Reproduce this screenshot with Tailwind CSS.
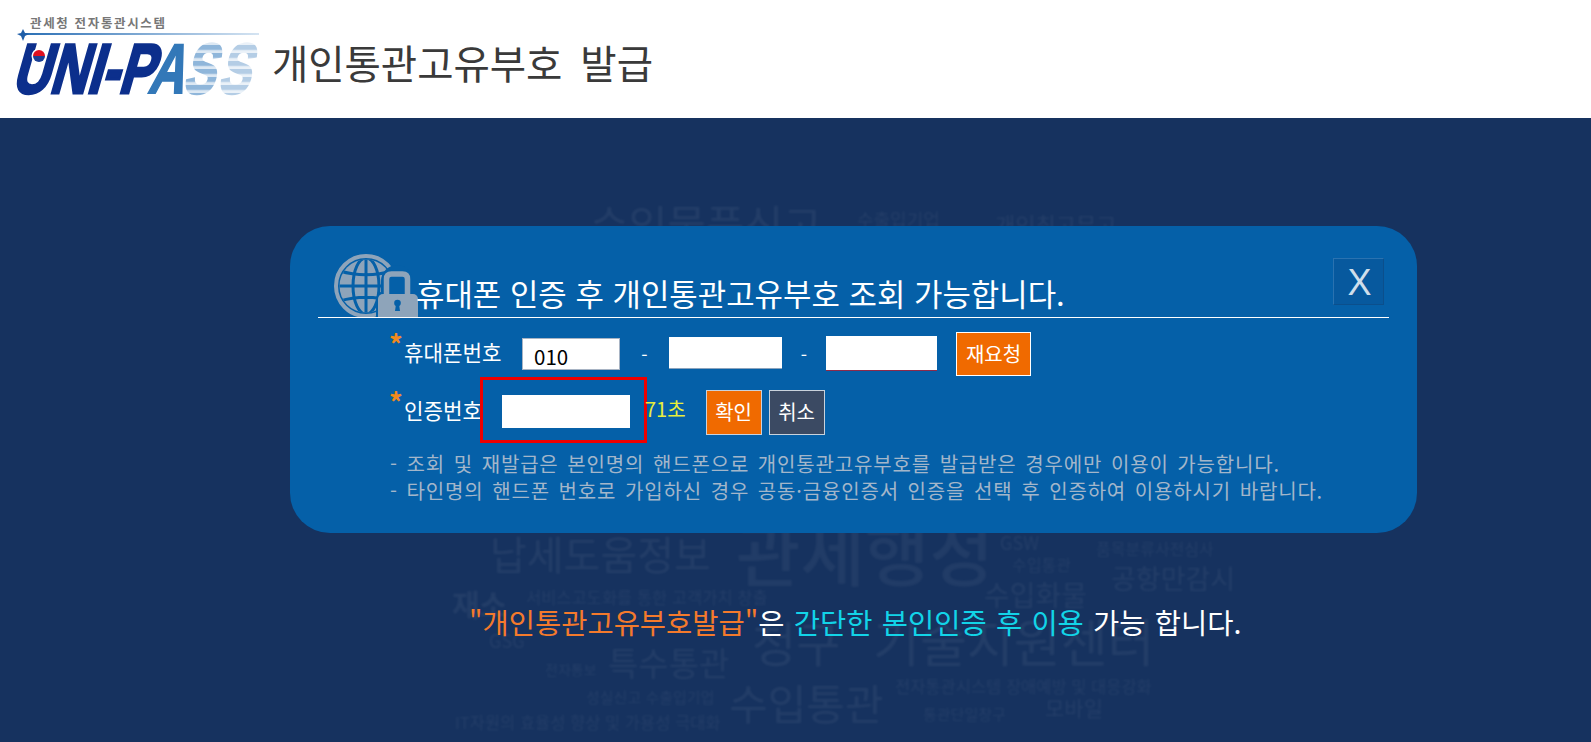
<!DOCTYPE html>
<html lang="ko">
<head>
<meta charset="utf-8">
<title>개인통관고유부호 발급</title>
<script src="https://cdn.jsdelivr.net/npm/@tailwindcss/browser@4"></script>
</head>
<body class="m-0 h-[742px] w-[1591px] overflow-hidden bg-[#16325f] font-['Noto_Sans_CJK_KR','Noto_Sans',sans-serif]">
<header class="flex h-[118px] items-start bg-white">
  <svg class="ml-[14px] mt-[12px] h-[86px] w-[246px] shrink-0" viewBox="14 12 246 86" xmlns="http://www.w3.org/2000/svg">
    <defs>
      <linearGradient id="ln" x1="0" x2="1" y1="0" y2="0"><stop offset="0" stop-color="#2a6fb5"/><stop offset="1" stop-color="#d5e4f2"/></linearGradient>
      <pattern id="stripes" width="8" height="8" patternUnits="userSpaceOnUse"><rect width="8" height="8" fill="#dce8f3"/><rect width="8" height="5" fill="#8fb6da"/></pattern>
      <pattern id="stripes2" width="8" height="8" patternUnits="userSpaceOnUse"><rect width="8" height="8" fill="#eaf1f8"/><rect width="8" height="5" fill="#b4cde5"/></pattern>
    </defs>
    <text x="30" y="28" font-size="12.5" font-weight="700" fill="#777" font-family="Noto Sans CJK KR" textLength="135">관세청  전자통관시스템</text>
    <rect x="23" y="33" width="236" height="2" fill="url(#ln)"/>
    <path d="M23 29l2 4 4 1-4 2-2 5-2-5-4-2 4-1z" fill="#1f5ea8"/>
    <g font-size="70" font-weight="700" font-family="Liberation Sans">
      <text transform="translate(11 93) skewX(-16)" fill="#0c2f8c" stroke="#0c2f8c" stroke-width="3" textLength="141" lengthAdjust="spacingAndGlyphs">UNI-P</text>
      <text transform="translate(147 93) skewX(-16)" fill="#3378b8" stroke="#3378b8" stroke-width="2" textLength="36" lengthAdjust="spacingAndGlyphs">A</text>
      <text transform="translate(182 93) skewX(-16)" fill="url(#stripes)" stroke="url(#stripes)" stroke-width="3" textLength="31" lengthAdjust="spacingAndGlyphs">S</text>
      <text transform="translate(217 93) skewX(-16)" fill="url(#stripes2)" stroke="url(#stripes2)" stroke-width="3" textLength="31" lengthAdjust="spacingAndGlyphs">S</text>
    </g>
    <circle cx="39" cy="56" r="7.5" fill="#fff"/>
    <path d="M33 56a6 6 0 0 1 12 0z" fill="#e01020"/>
    <path d="M33 56a6 6 0 0 0 12 0z" fill="#1b3f95"/>
  </svg>
  <h1 class="ml-[12px] mt-[34px] whitespace-pre text-[39.5px] leading-[56px] font-normal tracking-[-0.05px] [word-spacing:-2px] text-[#3a3a3a]">개인통관고유부호  발급</h1>
</header>

<main class="relative h-[624px]">
  <div class="pointer-events-none absolute inset-0 overflow-hidden whitespace-nowrap leading-none text-white/[0.06] blur-[1px]" aria-hidden="true">
    <span class="absolute left-[590px] top-[84px] text-[42px]">수입물품신고</span>
    <span class="absolute left-[857px] top-[92px] text-[18px]">수출입기업</span>
    <span class="absolute left-[995px] top-[94px] text-[22px]">개인최고무고</span>
    <span class="absolute left-[490px] top-[415px] text-[40px]">납세도움정보</span>
    <span class="absolute left-[736px] top-[398px] text-[70px] font-medium text-white/[0.05]">관세행정</span>
    <span class="absolute left-[1000px] top-[415px] text-[18px]">GSW</span>
    <span class="absolute left-[1012px] top-[438px] text-[16px]">수입통관</span>
    <span class="absolute left-[1096px] top-[422px] text-[16px]">품목분류사전심사</span>
    <span class="absolute left-[1111px] top-[446px] text-[27px]">공항만감시</span>
    <span class="absolute left-[984px] top-[462px] text-[28px]">수입화물</span>
    <span class="absolute left-[452px] top-[470px] text-[30px] font-bold">재소</span>
    <span class="absolute left-[526px] top-[471px] text-[16.5px]">서비스고도화를 통한 고객가치 창출</span>
    <span class="absolute left-[489px] top-[513px] text-[18px]">GSG</span>
    <span class="absolute left-[752px] top-[499px] text-[48px]">청구</span>
    <span class="absolute left-[873px] top-[497px] text-[51px]">기술지원센터</span>
    <span class="absolute left-[608px] top-[528px] text-[33px]">특수통관</span>
    <span class="absolute left-[545px] top-[544px] text-[14px]">전자통보</span>
    <span class="absolute left-[586px] top-[571px] text-[15px]">성실신고 수출입기업</span>
    <span class="absolute left-[455px] top-[596px] text-[16.5px]">IT자원의 효율성 향상 및 가용성 극대화</span>
    <span class="absolute left-[729px] top-[563px] text-[42px]">수입통관</span>
    <span class="absolute left-[895px] top-[560px] text-[16.5px]">전자통관시스템 장애예방 및 대응강화</span>
    <span class="absolute left-[923px] top-[588px] text-[15px]">통관단일창구</span>
    <span class="absolute left-[1045px] top-[579px] text-[21px]">모바일</span>
  </div>

  <section class="relative ml-[290px] mt-[108px] inline-block h-[307px] w-[1127px] rounded-[40px] bg-[#0560a8]">
    <div class="ml-[28px] mr-[28px] flex h-[92px] items-end border-b border-white">
      <svg class="ml-[16px] h-[63px] w-[84px] shrink-0" viewBox="0 0 84 63" xmlns="http://www.w3.org/2000/svg">
        <defs><clipPath id="g"><circle cx="32" cy="32" r="26.5"/></clipPath></defs>
        <circle cx="32" cy="32" r="30" fill="none" stroke="#8ea4ba" stroke-width="4"/>
        <g clip-path="url(#g)">
          <rect width="64" height="64" fill="#8ea4ba"/>
          <g fill="none" stroke="#0560a8" stroke-width="3">
            <ellipse cx="32" cy="32" rx="13" ry="28"/>
            <path d="M32 2v60M2 32h60M6 17c16 5 36 5 52 0M6 47c16-5 36-5 52 0"/>
          </g>
        </g>
        <path d="M42 63V46c0-3 2-8 5-8V27a16 16 0 0 1 16-16 16 16 0 0 1 16 16v11h5v25z" fill="#0560a8"/>
        <path d="M52.500 40V25q0-5 5-5h11q5 0 5 5v15" fill="none" stroke="#8ea4ba" stroke-width="5.500"/>
        <path d="M49 40h30a5 5 0 0 1 5 5v18H44V45a5 5 0 0 1 5-5z" fill="#8ea4ba"/>
        <circle cx="63.500" cy="49" r="3.300" fill="#0560a8"/><path d="M62 50h3l1 7h-5z" fill="#0560a8"/>
      </svg>
      <h2 class="mb-[2px] -ml-[2px] whitespace-nowrap text-[30.9px] leading-[44px] font-normal text-white">휴대폰 인증 후 개인통관고유부호 조회 가능합니다.</h2>
    </div>

    <button class="absolute right-[33px] top-[32px] flex h-[47px] w-[51px] items-center justify-center border border-t-[#2a72b0] border-l-[#2a72b0] border-r-[#0b4f8c] border-b-[#0b4f8c] bg-[#07599e] pl-[2px] pt-[3px] font-['Liberation_Sans',sans-serif] text-[36px] leading-none font-normal text-[#cfdeeb]">X</button>

    <div class="ml-[99px] mt-[14px] flex h-[44px] items-center">
      <span class="-mt-[4px] flex w-[133px] items-start text-[21.2px] leading-[28px] text-white"><span class="-mt-[9px] mr-[2px] w-[13px] text-[27px] leading-[30px] font-bold text-[#f08a1d]">*</span>휴대폰번호</span>
      <span class="flex h-[32px] w-[98px] items-center border border-[#a8b4c4] bg-white pl-[11px] pt-[5px] text-[20.5px] text-black">010</span>
      <span class="w-[49px] text-center text-[18px] text-white">-</span>
      <span class="-mt-[2px] h-[32px] w-[113px] border-b border-[#8aa3bd] bg-white"></span>
      <span class="w-[44px] text-center text-[18px] text-white">-</span>
      <span class="-mt-[1px] h-[35px] w-[111px] border-b border-[#8d2a4a] bg-white"></span>
      <button class="ml-[19px] h-[44px] w-[75px] border border-white bg-[#f06a00] text-[20px] text-white">재요청</button>
    </div>

    <div class="ml-[99px] mt-[1px] flex h-[66px] items-center">
      <span class="-mt-[1px] flex w-[91px] items-start whitespace-nowrap text-[21.2px] leading-[28px] text-white"><span class="-mt-[9px] mr-[2px] w-[13px] text-[27px] leading-[30px] font-bold text-[#f08a1d]">*</span>인증번호</span>
      <div class="flex h-[66px] w-[167px] items-center border-[3px] border-[#f00000] pl-[19px] pt-[3px]">
        <span class="h-[33px] w-[128px] bg-white"></span>
      </div>
      <span class="-mt-[2px] -ml-[2px] text-[20px] text-[#e8ee3a]">71초</span>
      <button class="ml-[20px] mt-[4px] h-[45px] w-[56px] border border-[#c9d2dc] bg-[#f06a00] text-[20px] text-white">확인</button>
      <button class="ml-[7px] mt-[4px] h-[45px] w-[56px] border border-[#c9d2dc] bg-[#3b4a63] text-[20px] text-white">취소</button>
    </div>

    <div class="ml-[100px] mt-[7px] whitespace-nowrap text-[20px] leading-[27px] tracking-[0.83px] [word-spacing:2.3px] text-[#a3b6ca]">
      <p>- 조회 및 재발급은 본인명의 핸드폰으로 개인통관고유부호를 발급받은 경우에만 이용이 가능합니다.</p>
      <p>- 타인명의 핸드폰 번호로 가입하신 경우 공동·금융인증서 인증을 선택 후 인증하여 이용하시기 바랍니다.</p>
    </div>
  </section>

  <p class="relative ml-[469px] mt-[69px] whitespace-nowrap text-[28.5px] leading-[40px] [word-spacing:1.3px] text-white"><span class="text-[#f47a2c]">"개인통관고유부호발급"</span>은 <span class="text-[#12d4e8]">간단한 본인인증 후 이용</span> 가능 합니다.</p>
</main>
</body>
</html>
